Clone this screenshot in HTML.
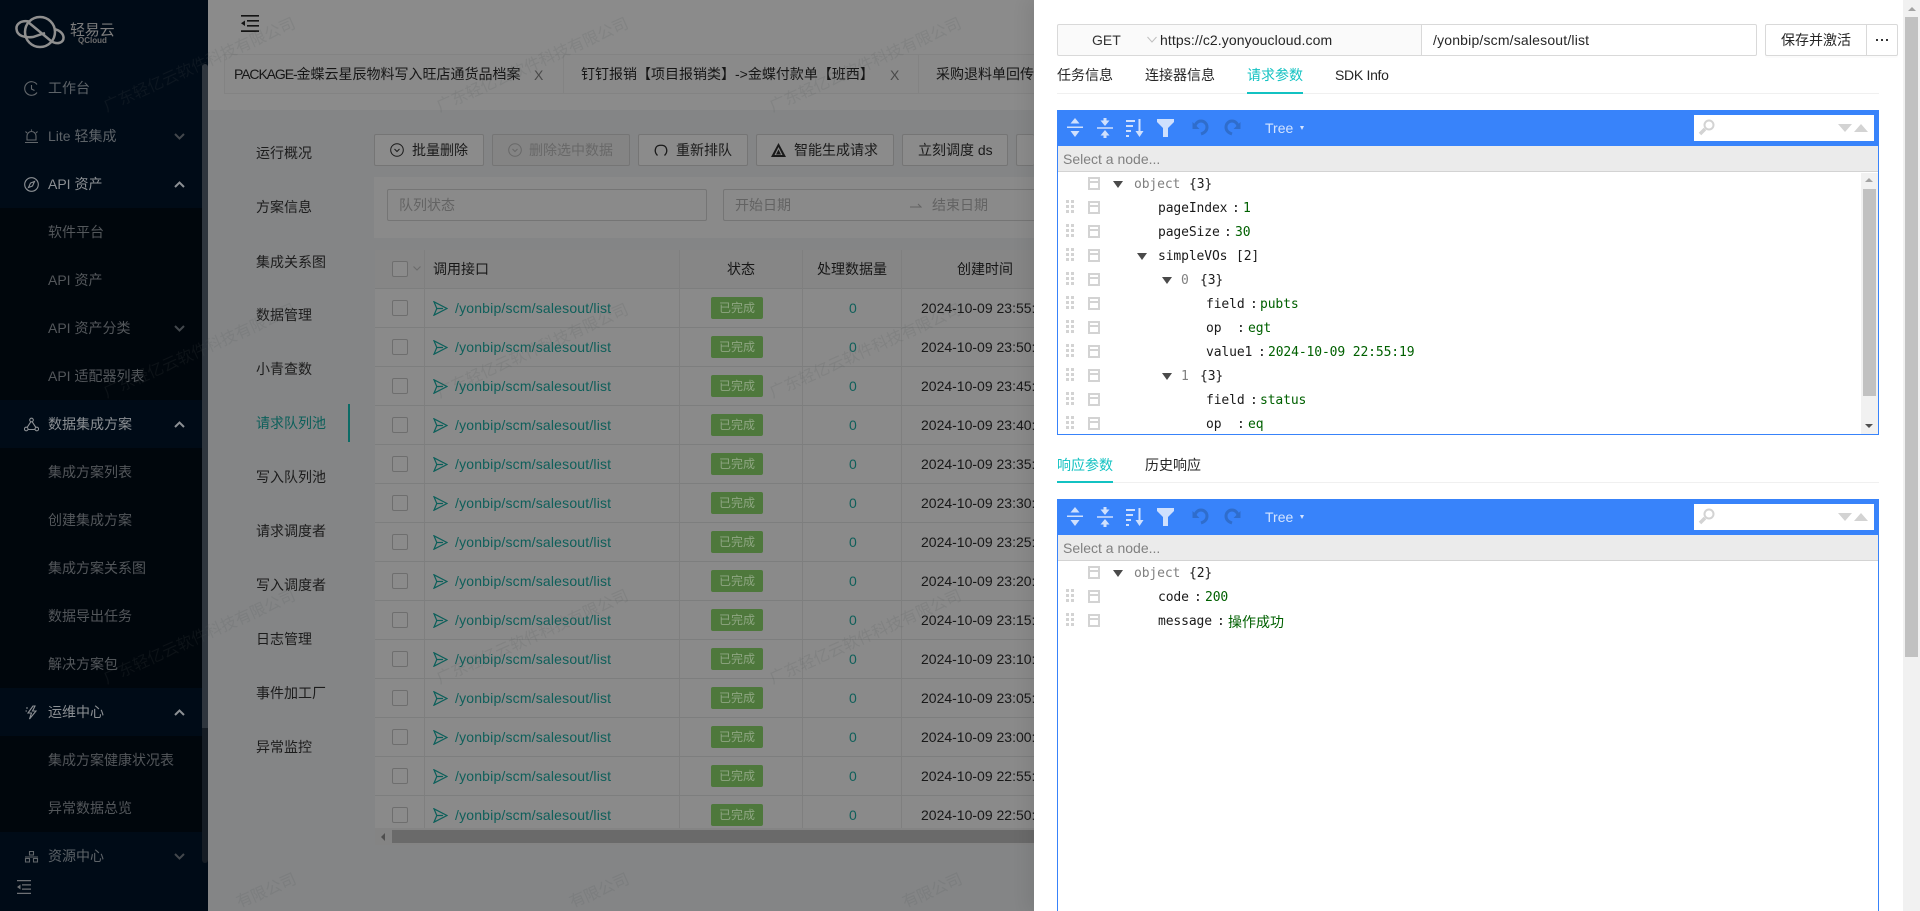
<!DOCTYPE html>
<html lang="zh">
<head>
<meta charset="utf-8">
<title>轻易云</title>
<style>
html,body{margin:0;padding:0;width:1920px;height:911px;overflow:hidden;background:#848586}
body{position:relative;font-family:"Liberation Sans","Noto Sans CJK SC",sans-serif;font-size:14px;color:#171717}
div,span,svg{position:absolute;box-sizing:border-box}
span{white-space:nowrap;line-height:22px}
.side{left:0;top:0;width:208px;height:911px;background:#000b17;overflow:hidden}
.sub{left:0;width:208px;background:#00060c}
.m{left:48px;color:#5d6368}
.m.b{color:#8c9094}
.ms{left:48px;color:#53575b}
.ic{left:24px;width:15px;height:15px;fill:none;stroke:#62676b;stroke-width:1.1}
.ic.b{stroke:#8c9094}
.ch{left:174px;width:11px;height:7px;fill:none;stroke:#43484d;stroke-width:2}
.ch.b{stroke:#8c9094}
.ln{left:256px;color:#1c1c1c}
.btn{top:134px;height:32px;background:#8b8b8b;border:1px solid #757575;border-radius:2px}
.bt{top:139px;color:#1a1a1a}
.r{left:375px;width:659px;height:39px;background:#8a8a8a;border-bottom:1px solid #7d7e7e;overflow:hidden}
.r .v{left:49px;top:0;width:1px;height:39px;background:#7f7f7f}
.r .cb{left:17px;top:11px;width:16px;height:16px;border:1px solid #6e6e6e;border-radius:2px;background:#8b8b8b}
.r svg{left:58px;top:12px;width:15px;height:15px;fill:none;stroke:#0b5f5a;stroke-width:1.2}
.r .u{left:80px;top:8px;color:#0f5f5a;letter-spacing:.18px}
.r .tg{left:336px;top:8px;width:52px;height:22px;background:#4e783c;border-radius:2px;color:#8fa683;font-size:12px;text-align:center;line-height:22px}
.r .n{left:474px;top:8px;color:#0f5f5a}
.r .d{left:546px;top:8px;color:#181818}
.r .l1,.r .l2,.r .l3{top:0;width:1px;height:39px;background:#7f7f7f}
.r .l1{left:304px}.r .l2{left:427px}.r .l3{left:526px}
.wm{color:rgba(80,84,88,.15);font-size:16px;width:230px;text-align:center;transform:translate(-50%,-50%) rotate(-24deg)}
.wb{line-height:12px}
.drawer{left:1034px;top:0;width:869px;height:911px;background:#fff;box-shadow:-6px 0 16px rgba(0,0,0,.08)}
.tab{color:#262626}
.tab.on{color:#13c2c2}
.ed{left:1057px;width:822px;border:1px solid #3883fa;background:#fff;overflow:hidden}
.menu{left:-1px;top:-1px;width:822px;height:36px;background:#3883fa}
.menu svg{top:8px;width:18px;height:20px}
.nav{left:0;top:35px;width:820px;height:26px;background:#ebebeb;border-bottom:1px solid #d3d3d3}
.nav span{left:5px;top:2px;font-size:14px;color:#808080}
.tree{left:0;top:61px;width:803px;overflow:hidden}
.t{left:0;width:800px;height:24px;font-family:"DejaVu Sans Mono","Liberation Mono",monospace;font-size:13px;letter-spacing:-.12px}
.t span{top:1px;line-height:24px;color:#1a1a1a}
.t .g{color:#808080}
.t .v{color:#006000}
.t .p{color:#1a1a1a}
.t .c{top:5px;left:30px;width:12px;height:13px;border:2px solid #d3d3d3}
.t .c:after{content:"";position:absolute;left:0;top:2px;width:8px;height:2px;background:#d3d3d3}
.t .dr{left:8px;top:4px;width:3px;height:3px;background:#d3d3d3;box-shadow:5px 0 #d3d3d3,0 5px #d3d3d3,5px 5px #d3d3d3,0 10px #d3d3d3,5px 10px #d3d3d3}
.t .tr{top:9px;width:0;height:0;border-left:5px solid transparent;border-right:5px solid transparent;border-top:7.500px solid #4a4a4a}
</style>
</head>
<body>
<!-- sidebar -->
<div class="side">
  <div class="sub" style="top:208px;height:192px"></div>
  <div class="sub" style="top:448px;height:240px"></div>
  <div class="sub" style="top:736px;height:96px"></div>

  <svg style="left:15px;top:15px;width:50px;height:34px" viewBox="0 0 50 34" fill="none" stroke="#8f8f8f" stroke-width="2.500">
    <circle cx="25" cy="17" r="15"/>
    <path d="M14 6.500C6 5 1 9 1.500 14 2 21 10 23 18 22L30 18"/>
    <path d="M13 7L36 26C42 30 49 28 48.500 22 48 18 44 15 39 14"/>
  </svg>
  <span style="left:70px;top:20px;font-size:15px;color:#7d7d7d;letter-spacing:-.2px">轻易云</span>
  <span style="left:78px;top:36px;font-size:8px;line-height:10px;color:#6e6e6e;font-weight:bold">QCloud</span>

  <svg class="ic" style="top:81px" viewBox="0 0 15 15"><path d="M13 3.500A6.800 6.800 0 1 0 13 11.500M7.500 4v4l3 1.500"/></svg>
  <span class="m" style="top:77px">工作台</span>
  <svg class="ic" style="top:129px" viewBox="0 0 15 15"><path d="M3 11V7a4.500 4.500 0 0 1 9 0v4zM1 13.500h13M1.500 2.500l1.500 1.500M13.500 2.500L12 4M7.500 .5v1.200"/></svg>
  <span class="m" style="top:125px">Lite 轻集成</span>
  <svg class="ch" style="top:133px" viewBox="0 0 11 7"><path d="M1 1l4.500 4.500L10 1"/></svg>
  <svg class="ic b" style="top:177px" viewBox="0 0 15 15"><circle cx="7.500" cy="7.500" r="6.800"/><path d="M10.500 4.500L8.500 9 4.500 10.500 6.500 6z"/></svg>
  <span class="m b" style="top:173px">API 资产</span>
  <svg class="ch b" style="top:181px" viewBox="0 0 11 7"><path d="M1 6l4.500-4.500L10 6"/></svg>
  <span class="ms" style="top:221px">软件平台</span>
  <span class="ms" style="top:269px">API 资产</span>
  <span class="ms" style="top:317px">API 资产分类</span>
  <svg class="ch" style="top:325px" viewBox="0 0 11 7"><path d="M1 1l4.500 4.500L10 1"/></svg>
  <span class="ms" style="top:365px">API 适配器列表</span>
  <svg class="ic b" style="top:417px" viewBox="0 0 15 15"><circle cx="7.500" cy="3" r="1.800"/><circle cx="2.200" cy="12" r="1.800"/><circle cx="12.800" cy="12" r="1.800"/><path d="M6.800 4.800L3.200 10.300M8.200 4.800l3.600 5.500M4 12.500h7"/></svg>
  <span class="m b" style="top:413px">数据集成方案</span>
  <svg class="ch b" style="top:421px" viewBox="0 0 11 7"><path d="M1 6l4.500-4.500L10 6"/></svg>
  <span class="ms" style="top:461px">集成方案列表</span>
  <span class="ms" style="top:509px">创建集成方案</span>
  <span class="ms" style="top:557px">集成方案关系图</span>
  <span class="ms" style="top:605px">数据导出任务</span>
  <span class="ms" style="top:653px">解决方案包</span>
  <svg class="ic b" style="top:705px" viewBox="0 0 15 15"><path d="M9 1L4 8h3.500L5.500 14 12 6H8.500L11 1zM2 3l2 0M1.500 6l1.500 0"/></svg>
  <span class="m b" style="top:701px">运维中心</span>
  <svg class="ch b" style="top:709px" viewBox="0 0 11 7"><path d="M1 6l4.500-4.500L10 6"/></svg>
  <span class="ms" style="top:749px">集成方案健康状况表</span>
  <span class="ms" style="top:797px">异常数据总览</span>
  <svg class="ic" style="top:849px" viewBox="0 0 15 15"><path d="M5.500 2.500h4v3.500h-4zM1.500 9.500h4v3.500h-4zM9.500 9.500h4v3.500h-4zM1 8h13"/></svg>
  <span class="m" style="top:845px">资源中心</span>
  <svg class="ch" style="top:853px" viewBox="0 0 11 7"><path d="M1 1l4.500 4.500L10 1"/></svg>

  <div style="left:202px;top:64px;width:6px;height:664px;background:#2e353d;border-radius:3px 3px 0 0"></div>
  <div style="left:202px;top:728px;width:6px;height:135px;background:#151c24;border-radius:0 0 3px 3px"></div>
  <svg style="left:17px;top:880px;width:14px;height:14px" viewBox="0 0 14 14" fill="#6e7175"><path d="M0 0h14v1.300H0zM5 4.200h9v1.300H5zM5 8.500h9v1.300H5zM0 12.700h14V14H0zM3.500 4.500v5L0 7z"/></svg>
</div>

<!-- header -->
<div style="left:208px;top:0;width:826px;height:110px;background:#8b8b8b"></div>
<svg style="left:241px;top:15px;width:18px;height:17px" viewBox="0 0 18 17" fill="#141414"><path d="M0 0h18v1.600H0zM6 5h12v1.600H6zM6 10h12v1.600H6zM0 15.300h18V17H0zM4 5.500v5.500L0 8.200z"/></svg>
<div style="left:224px;top:54px;width:810px;height:40px;background:#8a8a8a;border-top:1px solid #838383;border-bottom:1px solid #838383"></div>
<div style="left:224px;top:54px;width:1px;height:40px;background:#838383"></div>
<div style="left:563px;top:54px;width:1px;height:40px;background:#838383"></div>
<div style="left:918px;top:54px;width:1px;height:40px;background:#838383"></div>
<span style="left:234px;top:63px;color:#161616"><span style="position:static;letter-spacing:-1.100px">PACKAGE-</span>金蝶云星辰物料写入旺店通货品档案</span>
<span style="left:534px;top:64px;color:#4a4a4a">X</span>
<span style="left:581px;top:63px;color:#161616">钉钉报销【项目报销类】-&gt;金蝶付款单【班西】</span>
<span style="left:890px;top:64px;color:#4a4a4a">X</span>
<span style="left:936px;top:63px;color:#161616">采购退料单回传</span>

<!-- left inner nav -->
<span class="ln" style="top:142px">运行概况</span>
<span class="ln" style="top:196px">方案信息</span>
<span class="ln" style="top:251px">集成关系图</span>
<span class="ln" style="top:304px">数据管理</span>
<span class="ln" style="top:358px">小青查数</span>
<span class="ln" style="top:412px;color:#0b5f5a">请求队列池</span>
<div style="left:348px;top:404px;width:2px;height:38px;background:#0b6b66"></div>
<span class="ln" style="top:466px">写入队列池</span>
<span class="ln" style="top:520px">请求调度者</span>
<span class="ln" style="top:574px">写入调度者</span>
<span class="ln" style="top:628px">日志管理</span>
<span class="ln" style="top:682px">事件加工厂</span>
<span class="ln" style="top:736px">异常监控</span>

<!-- buttons -->
<div class="btn" style="left:374px;width:110px"></div>
<svg style="left:390px;top:143px;width:14px;height:14px" viewBox="0 0 14 14" fill="none" stroke="#1a1a1a"><circle cx="7" cy="7" r="6.300"/><path d="M4.500 6L7 8.500 9.500 6"/></svg>
<span class="bt" style="left:412px">批量删除</span>
<div class="btn" style="left:492px;width:138px;background:#848484"></div>
<svg style="left:508px;top:143px;width:14px;height:14px" viewBox="0 0 14 14" fill="none" stroke="#686868"><circle cx="7" cy="7" r="6.300"/><path d="M4.500 6L7 8.500 9.500 6"/></svg>
<span class="bt" style="left:529px;color:#686868">删除选中数据</span>
<div class="btn" style="left:638px;width:110px"></div>
<svg style="left:654px;top:143px;width:14px;height:14px" viewBox="0 0 14 14" fill="none" stroke="#1a1a1a" stroke-width="1.300"><path d="M3.500 12.500C1 10 .8 7 2 4.500 3.500 1.500 10.500 1.500 12 4.500c1.200 2.500 1 5.500-1.500 8"/></svg>
<span class="bt" style="left:676px">重新排队</span>
<div class="btn" style="left:756px;width:138px"></div>
<svg style="left:771px;top:143px;width:15px;height:14px" viewBox="0 0 15 14" fill="#1a1a1a"><path d="M7.500 0L15 14H0zM7.500 4L3.500 12H11.500z"/><path d="M7.500 6.500L10 11.500H5z"/></svg>
<span class="bt" style="left:794px">智能生成请求</span>
<div class="btn" style="left:902px;width:106px"></div>
<span class="bt" style="left:918px">立刻调度 ds</span>
<div class="btn" style="left:1016px;width:18px;border-right:0"></div>

<!-- filter card -->
<div style="left:374px;top:177px;width:660px;height:61px;background:#8a8a8a"></div>
<div style="left:387px;top:189px;width:320px;height:32px;background:#8a8a8a;border:1px solid #757575;border-radius:2px"></div>
<span style="left:399px;top:194px;color:#636363">队列状态</span>
<div style="left:723px;top:189px;width:311px;height:32px;background:#8a8a8a;border:1px solid #757575;border-right:0;border-radius:2px 0 0 2px"></div>
<span style="left:735px;top:194px;color:#636363">开始日期</span>
<svg style="left:910px;top:202px;width:12px;height:7px" viewBox="0 0 12 7" fill="none" stroke="#636363"><path d="M0 5h11L8 2"/></svg>
<span style="left:932px;top:194px;color:#636363">结束日期</span>

<!-- table -->
<div style="left:375px;top:250px;width:659px;height:39px;background:#868686;border-bottom:1px solid #7d7e7e"></div>
<div style="left:392px;top:261px;width:16px;height:16px;border:1px solid #6e6e6e;border-radius:2px;background:#8b8b8b"></div>
<svg style="left:413px;top:266px;width:8px;height:5px" viewBox="0 0 8 5" fill="none" stroke="#6b6b6b"><path d="M.5.5L4 4 7.500.5"/></svg>
<div style="left:424px;top:250px;width:1px;height:39px;background:#7f7f7f"></div>
<div style="left:679px;top:250px;width:1px;height:39px;background:#7f7f7f"></div>
<div style="left:802px;top:250px;width:1px;height:39px;background:#7f7f7f"></div>
<div style="left:901px;top:250px;width:1px;height:39px;background:#7f7f7f"></div>
<span style="left:433px;top:258px;color:#171717">调用接口</span>
<span style="left:727px;top:258px;color:#171717">状态</span>
<span style="left:817px;top:258px;color:#171717">处理数据量</span>
<span style="left:957px;top:258px;color:#171717">创建时间</span>

<svg style="width:0;height:0;left:0;top:0"><defs><path id="ar" d="M1 .8L14 7.500 1 14.200 3.800 7.500zM3.800 7.500H10"/></defs></svg>

<div class="r" style="top:289px"><div class="v"></div><div class="l1"></div><div class="l2"></div><div class="l3"></div><div class="cb"></div><svg viewBox="0 0 15 15"><use href="#ar"/></svg><span class="u">/yonbip/scm/salesout/list</span><div class="tg">已完成</div><span class="n">0</span><span class="d">2024-10-09 23:55:19</span></div>
<div class="r" style="top:328px"><div class="v"></div><div class="l1"></div><div class="l2"></div><div class="l3"></div><div class="cb"></div><svg viewBox="0 0 15 15"><use href="#ar"/></svg><span class="u">/yonbip/scm/salesout/list</span><div class="tg">已完成</div><span class="n">0</span><span class="d">2024-10-09 23:50:19</span></div>
<div class="r" style="top:367px"><div class="v"></div><div class="l1"></div><div class="l2"></div><div class="l3"></div><div class="cb"></div><svg viewBox="0 0 15 15"><use href="#ar"/></svg><span class="u">/yonbip/scm/salesout/list</span><div class="tg">已完成</div><span class="n">0</span><span class="d">2024-10-09 23:45:19</span></div>
<div class="r" style="top:406px"><div class="v"></div><div class="l1"></div><div class="l2"></div><div class="l3"></div><div class="cb"></div><svg viewBox="0 0 15 15"><use href="#ar"/></svg><span class="u">/yonbip/scm/salesout/list</span><div class="tg">已完成</div><span class="n">0</span><span class="d">2024-10-09 23:40:19</span></div>
<div class="r" style="top:445px"><div class="v"></div><div class="l1"></div><div class="l2"></div><div class="l3"></div><div class="cb"></div><svg viewBox="0 0 15 15"><use href="#ar"/></svg><span class="u">/yonbip/scm/salesout/list</span><div class="tg">已完成</div><span class="n">0</span><span class="d">2024-10-09 23:35:19</span></div>
<div class="r" style="top:484px"><div class="v"></div><div class="l1"></div><div class="l2"></div><div class="l3"></div><div class="cb"></div><svg viewBox="0 0 15 15"><use href="#ar"/></svg><span class="u">/yonbip/scm/salesout/list</span><div class="tg">已完成</div><span class="n">0</span><span class="d">2024-10-09 23:30:19</span></div>
<div class="r" style="top:523px"><div class="v"></div><div class="l1"></div><div class="l2"></div><div class="l3"></div><div class="cb"></div><svg viewBox="0 0 15 15"><use href="#ar"/></svg><span class="u">/yonbip/scm/salesout/list</span><div class="tg">已完成</div><span class="n">0</span><span class="d">2024-10-09 23:25:19</span></div>
<div class="r" style="top:562px"><div class="v"></div><div class="l1"></div><div class="l2"></div><div class="l3"></div><div class="cb"></div><svg viewBox="0 0 15 15"><use href="#ar"/></svg><span class="u">/yonbip/scm/salesout/list</span><div class="tg">已完成</div><span class="n">0</span><span class="d">2024-10-09 23:20:19</span></div>
<div class="r" style="top:601px"><div class="v"></div><div class="l1"></div><div class="l2"></div><div class="l3"></div><div class="cb"></div><svg viewBox="0 0 15 15"><use href="#ar"/></svg><span class="u">/yonbip/scm/salesout/list</span><div class="tg">已完成</div><span class="n">0</span><span class="d">2024-10-09 23:15:19</span></div>
<div class="r" style="top:640px"><div class="v"></div><div class="l1"></div><div class="l2"></div><div class="l3"></div><div class="cb"></div><svg viewBox="0 0 15 15"><use href="#ar"/></svg><span class="u">/yonbip/scm/salesout/list</span><div class="tg">已完成</div><span class="n">0</span><span class="d">2024-10-09 23:10:19</span></div>
<div class="r" style="top:679px"><div class="v"></div><div class="l1"></div><div class="l2"></div><div class="l3"></div><div class="cb"></div><svg viewBox="0 0 15 15"><use href="#ar"/></svg><span class="u">/yonbip/scm/salesout/list</span><div class="tg">已完成</div><span class="n">0</span><span class="d">2024-10-09 23:05:19</span></div>
<div class="r" style="top:718px"><div class="v"></div><div class="l1"></div><div class="l2"></div><div class="l3"></div><div class="cb"></div><svg viewBox="0 0 15 15"><use href="#ar"/></svg><span class="u">/yonbip/scm/salesout/list</span><div class="tg">已完成</div><span class="n">0</span><span class="d">2024-10-09 23:00:19</span></div>
<div class="r" style="top:757px"><div class="v"></div><div class="l1"></div><div class="l2"></div><div class="l3"></div><div class="cb"></div><svg viewBox="0 0 15 15"><use href="#ar"/></svg><span class="u">/yonbip/scm/salesout/list</span><div class="tg">已完成</div><span class="n">0</span><span class="d">2024-10-09 22:55:19</span></div>
<div class="r" style="top:796px;height:32px;border-bottom:0"><div class="v"></div><div class="l1"></div><div class="l2"></div><div class="l3"></div><div class="cb"></div><svg viewBox="0 0 15 15"><use href="#ar"/></svg><span class="u">/yonbip/scm/salesout/list</span><div class="tg">已完成</div><span class="n">0</span><span class="d">2024-10-09 22:50:19</span></div>

<!-- table h-scroll -->
<div style="left:375px;top:828px;width:659px;height:17px;background:#848484"></div>
<div style="left:392px;top:830px;width:642px;height:13px;background:#6a6a6a"></div>
<div style="left:381px;top:833px;width:0;height:0;border-top:4px solid transparent;border-bottom:4px solid transparent;border-right:4px solid #4f4f4f"></div>

<!-- watermarks -->
<div style="left:0;top:0;width:1034px;height:911px;overflow:hidden">
<span class="wm" style="left:200px;top:66px">广东轻亿云软件科技有限公司</span>
<span class="wm" style="left:533px;top:66px">广东轻亿云软件科技有限公司</span>
<span class="wm" style="left:866px;top:66px">广东轻亿云软件科技有限公司</span>
<span class="wm" style="left:200px;top:352px">广东轻亿云软件科技有限公司</span>
<span class="wm" style="left:533px;top:352px">广东轻亿云软件科技有限公司</span>
<span class="wm" style="left:866px;top:352px">广东轻亿云软件科技有限公司</span>
<span class="wm" style="left:200px;top:638px">广东轻亿云软件科技有限公司</span>
<span class="wm" style="left:533px;top:638px">广东轻亿云软件科技有限公司</span>
<span class="wm" style="left:866px;top:638px">广东轻亿云软件科技有限公司</span>
<span class="wm wb" style="left:245px;top:901px;width:16px">有</span>
<span class="wm wb" style="left:274px;top:889px;width:48px">限公司</span>
<span class="wm wb" style="left:578px;top:901px;width:16px">有</span>
<span class="wm wb" style="left:607px;top:889px;width:48px">限公司</span>
<span class="wm wb" style="left:911px;top:901px;width:16px">有</span>
<span class="wm wb" style="left:940px;top:889px;width:48px">限公司</span>
</div>

<!-- drawer -->
<div class="drawer"></div>

<!-- url bar -->
<div style="left:1057px;top:24px;width:365px;height:32px;background:#fafafa;border:1px solid #d9d9d9;border-radius:2px 0 0 2px"></div>
<div style="left:1421px;top:24px;width:336px;height:32px;background:#fff;border:1px solid #d9d9d9;border-radius:0 2px 2px 0"></div>
<span style="left:1092px;top:29px;color:#333">GET</span>
<svg style="left:1147px;top:36px;width:10px;height:7px" viewBox="0 0 10 7" fill="none" stroke="#bfbfbf"><path d="M.5 1L5 6 9.500 1"/></svg>
<span style="left:1160px;top:29px;color:#262626;letter-spacing:.1px">https://c2.yonyoucloud.com</span>
<span style="left:1433px;top:29px;color:#262626;letter-spacing:.18px">/yonbip/scm/salesout/list</span>
<div style="left:1765px;top:24px;width:133px;height:32px;background:#fff;border:1px solid #d9d9d9;border-radius:2px;box-shadow:0 2px 0 rgba(0,0,0,.015)"></div>
<div style="left:1866px;top:24px;width:1px;height:32px;background:#d9d9d9"></div>
<span style="left:1781px;top:29px;color:#262626">保存并激活</span>
<div style="left:1876px;top:39px;width:2px;height:2px;background:#333;box-shadow:5px 0 #333,10px 0 #333"></div>

<!-- tabs 1 -->
<span class="tab" style="left:1057px;top:64px">任务信息</span>
<span class="tab" style="left:1145px;top:64px">连接器信息</span>
<span class="tab on" style="left:1247px;top:64px">请求参数</span>
<span class="tab" style="left:1335px;top:64px;letter-spacing:-.3px">SDK Info</span>
<div style="left:1057px;top:93px;width:822px;height:1px;background:#f0f0f0"></div>
<div style="left:1247px;top:92px;width:56px;height:2px;background:#13c2c2"></div>

<!-- editor 1 -->
<div class="ed" style="top:110px;height:325px">
  <div class="menu">
    <svg style="left:9px" viewBox="0 0 18 20" fill="#cfe0fd"><path d="M9 0l4.500 5.500h-9zM1 8.500h16v1.500H1zM4.500 13h9L9 19z"/></svg>
    <svg style="left:39px" viewBox="0 0 18 20" fill="#cfe0fd"><path d="M9 8L4.500 2.500h3V0h3v2.500h3zM1 9.300h16v1.500H1zM9 12l4.500 5.500h-3V20h-3v-2.500h-3z"/></svg>
    <svg style="left:69px" viewBox="0 0 18 20" fill="#cfe0fd"><path d="M0 2h9v2H0zM0 7h7v2H0zM0 12h5v2H0zM0 17h3v2H0zM12.500 1h2v12h3l-4 6-4-6h3z"/></svg>
    <svg style="left:100px" viewBox="0 0 18 20" fill="#cfe0fd"><path d="M0 1h17v3l-6 6v9H6v-9L0 4z"/></svg>
    <svg style="left:135px" viewBox="0 0 18 20" fill="none" stroke="#2f6dcc" stroke-width="3"><path d="M3 9a6 6 0 0 1 12 0c0 4-3 6-6 7"/><path d="M.5 4v7h7z" fill="#2f6dcc" stroke="none"/></svg>
    <svg style="left:166px" viewBox="0 0 18 20" fill="none" stroke="#2f6dcc" stroke-width="3"><path d="M15 9a6 6 0 0 0-12 0c0 4 3 6 6 7"/><path d="M17.500 4v7h-7z" fill="#2f6dcc" stroke="none"/></svg>
    <span style="left:208px;top:7px;color:#d5e4fe">Tree</span>
    <div style="left:243px;top:16px;width:0;height:0;border-left:2.500px solid transparent;border-right:2.500px solid transparent;border-top:4px solid #d5e4fe"></div>
    <div style="left:637px;top:5px;width:180px;height:26px;background:#fff">
      <svg style="left:4px;top:4px;width:17px;height:17px" viewBox="0 0 17 17" fill="none" stroke="#d3d3d3"><circle cx="11" cy="6" r="4.500" stroke-width="2"/><path d="M7 10l-5 5" stroke-width="3.500"/></svg>
      <div style="left:144px;top:9px;width:0;height:0;border-left:7px solid transparent;border-right:7px solid transparent;border-top:8px solid #d3d3d3"></div>
      <div style="left:160px;top:9px;width:0;height:0;border-left:7px solid transparent;border-right:7px solid transparent;border-bottom:8px solid #d3d3d3"></div>
    </div>
  </div>
  <div class="nav"><span>Select a node...</span></div>
  <div class="tree" style="height:262px">
    <div class="t" style="top:0"><div class="c"></div><div class="tr" style="left:55px"></div><span class="g" style="left:76px">object</span><span class="p" style="left:131px">{3}</span></div>
    <div class="t" style="top:24px"><div class="dr"></div><div class="c"></div><span style="left:100px">pageIndex</span><span style="left:174px">:</span><span class="v" style="left:185px">1</span></div>
    <div class="t" style="top:48px"><div class="dr"></div><div class="c"></div><span style="left:100px">pageSize</span><span style="left:166px">:</span><span class="v" style="left:177px">30</span></div>
    <div class="t" style="top:72px"><div class="dr"></div><div class="c"></div><div class="tr" style="left:79px"></div><span style="left:100px">simpleVOs</span><span class="p" style="left:178px">[2]</span></div>
    <div class="t" style="top:96px"><div class="dr"></div><div class="c"></div><div class="tr" style="left:104px"></div><span class="g" style="left:123px">0</span><span class="p" style="left:142px">{3}</span></div>
    <div class="t" style="top:120px"><div class="dr"></div><div class="c"></div><span style="left:148px">field</span><span style="left:192px">:</span><span class="v" style="left:202px">pubts</span></div>
    <div class="t" style="top:144px"><div class="dr"></div><div class="c"></div><span style="left:148px">op</span><span style="left:179px">:</span><span class="v" style="left:190px">egt</span></div>
    <div class="t" style="top:168px"><div class="dr"></div><div class="c"></div><span style="left:148px">value1</span><span style="left:200px">:</span><span class="v" style="left:210px">2024-10-09 22:55:19</span></div>
    <div class="t" style="top:192px"><div class="dr"></div><div class="c"></div><div class="tr" style="left:104px"></div><span class="g" style="left:123px">1</span><span class="p" style="left:142px">{3}</span></div>
    <div class="t" style="top:216px"><div class="dr"></div><div class="c"></div><span style="left:148px">field</span><span style="left:192px">:</span><span class="v" style="left:202px">status</span></div>
    <div class="t" style="top:240px"><div class="dr"></div><div class="c"></div><span style="left:148px">op</span><span style="left:179px">:</span><span class="v" style="left:190px">eq</span></div>
  </div>
  <div style="left:803px;top:62px;width:17px;height:261px;background:#f1f1f1">
    <div style="left:4px;top:5px;width:0;height:0;border-left:4px solid transparent;border-right:4px solid transparent;border-bottom:4px solid #a3a3a3"></div>
    <div style="left:2px;top:16px;width:13px;height:207px;background:#c1c1c1"></div>
    <div style="left:4px;top:251px;width:0;height:0;border-left:4px solid transparent;border-right:4px solid transparent;border-top:4px solid #505050"></div>
  </div>
</div>

<!-- tabs 2 -->
<span class="tab on" style="left:1057px;top:454px">响应参数</span>
<span class="tab" style="left:1145px;top:454px">历史响应</span>
<div style="left:1057px;top:482px;width:822px;height:1px;background:#f0f0f0"></div>
<div style="left:1057px;top:481px;width:56px;height:2px;background:#13c2c2"></div>

<!-- editor 2 -->
<div class="ed" style="top:499px;height:412px;border-bottom:0">
  <div class="menu">
    <svg style="left:9px" viewBox="0 0 18 20" fill="#cfe0fd"><path d="M9 0l4.500 5.500h-9zM1 8.500h16v1.500H1zM4.500 13h9L9 19z"/></svg>
    <svg style="left:39px" viewBox="0 0 18 20" fill="#cfe0fd"><path d="M9 8L4.500 2.500h3V0h3v2.500h3zM1 9.300h16v1.500H1zM9 12l4.500 5.500h-3V20h-3v-2.500h-3z"/></svg>
    <svg style="left:69px" viewBox="0 0 18 20" fill="#cfe0fd"><path d="M0 2h9v2H0zM0 7h7v2H0zM0 12h5v2H0zM0 17h3v2H0zM12.500 1h2v12h3l-4 6-4-6h3z"/></svg>
    <svg style="left:100px" viewBox="0 0 18 20" fill="#cfe0fd"><path d="M0 1h17v3l-6 6v9H6v-9L0 4z"/></svg>
    <svg style="left:135px" viewBox="0 0 18 20" fill="none" stroke="#2f6dcc" stroke-width="3"><path d="M3 9a6 6 0 0 1 12 0c0 4-3 6-6 7"/><path d="M.5 4v7h7z" fill="#2f6dcc" stroke="none"/></svg>
    <svg style="left:166px" viewBox="0 0 18 20" fill="none" stroke="#2f6dcc" stroke-width="3"><path d="M15 9a6 6 0 0 0-12 0c0 4 3 6 6 7"/><path d="M17.500 4v7h-7z" fill="#2f6dcc" stroke="none"/></svg>
    <span style="left:208px;top:7px;color:#d5e4fe">Tree</span>
    <div style="left:243px;top:16px;width:0;height:0;border-left:2.500px solid transparent;border-right:2.500px solid transparent;border-top:4px solid #d5e4fe"></div>
    <div style="left:637px;top:5px;width:180px;height:26px;background:#fff">
      <svg style="left:4px;top:4px;width:17px;height:17px" viewBox="0 0 17 17" fill="none" stroke="#d3d3d3"><circle cx="11" cy="6" r="4.500" stroke-width="2"/><path d="M7 10l-5 5" stroke-width="3.500"/></svg>
      <div style="left:144px;top:9px;width:0;height:0;border-left:7px solid transparent;border-right:7px solid transparent;border-top:8px solid #d3d3d3"></div>
      <div style="left:160px;top:9px;width:0;height:0;border-left:7px solid transparent;border-right:7px solid transparent;border-bottom:8px solid #d3d3d3"></div>
    </div>
  </div>
  <div class="nav"><span>Select a node...</span></div>
  <div class="tree" style="height:349px">
    <div class="t" style="top:0"><div class="c"></div><div class="tr" style="left:55px"></div><span class="g" style="left:76px">object</span><span class="p" style="left:131px">{2}</span></div>
    <div class="t" style="top:24px"><div class="dr"></div><div class="c"></div><span style="left:100px">code</span><span style="left:136px">:</span><span class="v" style="left:147px">200</span></div>
    <div class="t" style="top:48px"><div class="dr"></div><div class="c"></div><span style="left:100px">message</span><span style="left:159px">:</span><span class="v" style="left:170px;font-family:'Noto Sans CJK SC',sans-serif;font-size:14px;letter-spacing:0">操作成功</span></div>
  </div>
</div>

<!-- page scrollbar -->
<div style="left:1903px;top:0;width:17px;height:911px;background:#f1f1f1"></div>
<div style="left:1908px;top:7px;width:0;height:0;border-left:4px solid transparent;border-right:4px solid transparent;border-bottom:4px solid #a3a3a3"></div>
<div style="left:1905px;top:17px;width:13px;height:640px;background:#c1c1c1"></div>
</body>
</html>
